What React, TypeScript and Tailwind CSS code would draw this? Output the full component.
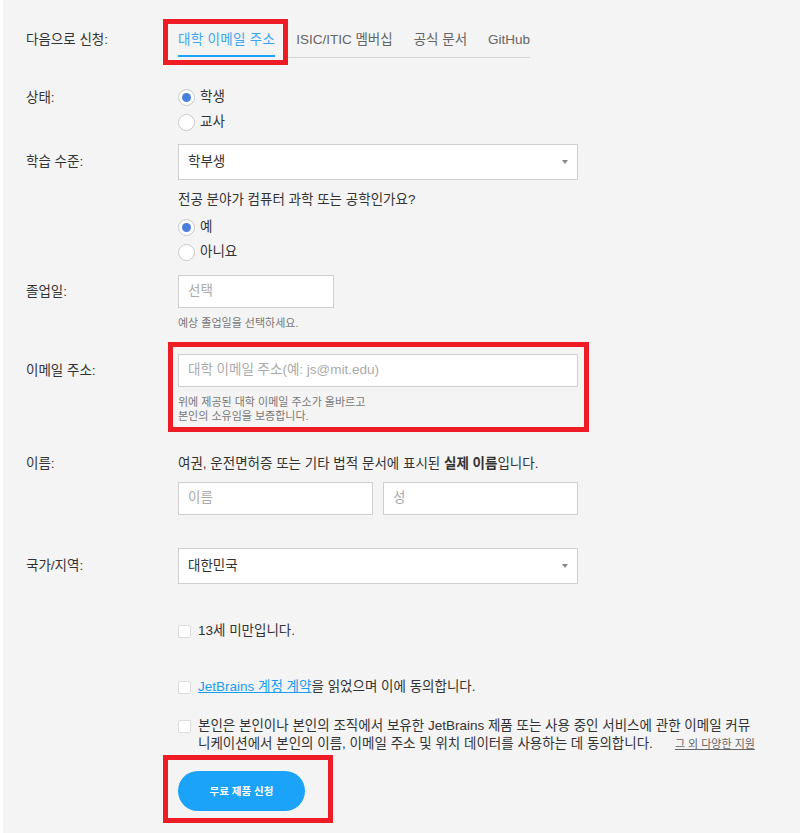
import type {ReactNode} from "react"

const FONT = "font-['Liberation_Sans','Noto_Sans_CJK_KR',sans-serif]"

function Radio({checked, label}: {checked?: boolean; label: string}) {
    return (
        <div className="flex h-[25px] items-center">
            <span className="flex h-[17px] w-[17px] items-center justify-center rounded-full border border-[#c9c9c9] bg-white">
                {checked && <span className="h-[9px] w-[9px] rounded-full bg-[#4a80dc]" />}
            </span>
            <span className="ml-[5px] text-[13.5px] text-[#333]">{label}</span>
        </div>
    )
}

function Checkbox() {
    return <span className="mt-[3px] h-[13px] w-[13px] shrink-0 rounded-[2px] border border-[#dcdcdc] bg-white" />
}

function Select({value}: {value: string}) {
    return (
        <div className="flex h-[36px] w-[400px] items-center justify-between border border-[#cfcfcf] bg-white pl-[9px] pr-[9px]">
            <span className="text-[13.5px] text-[#333]">{value}</span>
            <span className="h-0 w-0 border-x-[3px] border-t-[4px] border-x-transparent border-t-[#888]" />
        </div>
    )
}

function Input({placeholder, width}: {placeholder: string; width: string}) {
    return (
        <div className={`flex h-[33px] items-center border border-[#cfcfcf] bg-white pl-[9px] ${width}`}>
            <span className="text-[13.5px] text-[#aaa]">{placeholder}</span>
        </div>
    )
}

function Row({label, labelClass, className, children}: {
    label?: string
    labelClass?: string
    className?: string
    children: ReactNode
}) {
    return (
        <div className={`flex ${className ?? ""}`}>
            <div className={`w-[152px] shrink-0 text-[13.5px] text-[#333] ${labelClass ?? ""}`}>{label}</div>
            <div className="flex flex-col">{children}</div>
        </div>
    )
}

export default function App() {
    return (
        <div className={`min-h-screen border-l-[3px] border-white bg-[#f4f4f4] ${FONT}`}>
            <div className="pl-[23px] pt-[19px] pb-[20px]">
                {/* 신청 방식 탭 */}
                <div className="flex">
                    <div className="w-[152px] shrink-0 pt-[13px] text-[13.5px] leading-4 text-[#333]">다음으로 신청:</div>
                    <div className="flex items-start">
                        <div className="ml-[-15px] border-[5px] border-[#ee1c25] pl-[10px] pr-[8px] pt-[8px] pb-[3px]">
                            <div className="text-[13.5px] leading-4 tracking-[0.3px] text-[#3aa6f0]">대학 이메일 주소</div>
                            <div className="mt-[7px] h-[2px] bg-[#1aa3f8]" />
                        </div>
                        <div className="flex gap-[21px] border-b border-[#d4d4d4] pl-[8px] pt-[13px] pb-[9px] text-[13.5px] leading-4 text-[#666]">
                            <span>ISIC/ITIC 멤버십</span>
                            <span>공식 문서</span>
                            <span>GitHub</span>
                        </div>
                    </div>
                </div>

                <Row label="상태:" labelClass="leading-[25px]" className="mt-[20px]">
                    <Radio checked label="학생" />
                    <Radio label="교사" />
                </Row>

                <Row label="학습 수준:" labelClass="leading-[36px]" className="mt-[9px]">
                    <Select value="학부생" />
                    <div className="mt-[12px] text-[13.5px] leading-4 text-[#333]">전공 분야가 컴퓨터 과학 또는 공학인가요?</div>
                    <div className="mt-[7px]">
                        <Radio checked label="예" />
                        <Radio label="아니요" />
                    </div>
                </Row>

                <Row label="졸업일:" labelClass="leading-[33px]" className="mt-[10px]">
                    <Input placeholder="선택" width="w-[156px]" />
                    <div className="mt-[8px] text-[11px] leading-[14px] text-[#777]">예상 졸업일을 선택하세요.</div>
                </Row>

                <Row label="이메일 주소:" labelClass="pt-[12px] leading-[33px]" className="mt-[12px]">
                    <div className="ml-[-10px] border-[5px] border-[#ee1c25] pl-[5px] pr-[6px] pt-[7px] pb-[4px]">
                        <Input placeholder="대학 이메일 주소(예: js@mit.edu)" width="w-[400px]" />
                        <div className="mt-[8px] text-[11px] leading-[14px] text-[#777]">
                            위에 제공된 대학 이메일 주소가 올바르고
                            <br />
                            본인의 소유임을 보증합니다.
                        </div>
                    </div>
                </Row>

                <Row label="이름:" labelClass="leading-4" className="mt-[24px]">
                    <div className="text-[13.5px] leading-4 text-[#333]">
                        여권, 운전면허증 또는 기타 법적 문서에 표시된 <b className="font-bold">실제 이름</b>입니다.
                    </div>
                    <div className="mt-[10px] flex gap-[10px]">
                        <Input placeholder="이름" width="w-[195px]" />
                        <Input placeholder="성" width="w-[195px]" />
                    </div>
                </Row>

                <Row label="국가/지역:" labelClass="leading-[35px]" className="mt-[33px]">
                    <Select value="대한민국" />
                </Row>

                <div className="ml-[152px] text-[13.5px] leading-[18px] text-[#333]">
                    <div className="mt-[38px] flex gap-[7px]">
                        <Checkbox />
                        <span>13세 미만입니다.</span>
                    </div>
                    <div className="mt-[38px] flex gap-[7px]">
                        <Checkbox />
                        <span>
                            <a className="text-[#1a9cf0] underline">JetBrains 계정 계약</a>을 읽었으며 이에 동의합니다.
                        </span>
                    </div>
                    <div className="mt-[21px] flex gap-[7px]">
                        <Checkbox />
                        <span className="whitespace-nowrap">
                            본인은 본인이나 본인의 조직에서 보유한 JetBrains 제품 또는 사용 중인 서비스에 관한 이메일 커뮤
                            <br />
                            니케이션에서 본인의 이름, 이메일 주소 및 위치 데이터를 사용하는 데 동의합니다.
                            <a className="ml-[22px] text-[11px] text-[#666] underline">그 외 다양한 지원</a>
                        </span>
                    </div>
                    <div className="ml-[-15px] mt-[2px] w-fit border-[5px] border-[#ee1c25] pl-[10px] pr-[23px] pt-[11px] pb-[7px]">
                        <button className="h-[40px] w-[127px] rounded-full bg-[#1aa3f8] text-[10.5px] font-bold text-white">
                            무료 제품 신청
                        </button>
                    </div>
                </div>
            </div>
        </div>
    )
}
